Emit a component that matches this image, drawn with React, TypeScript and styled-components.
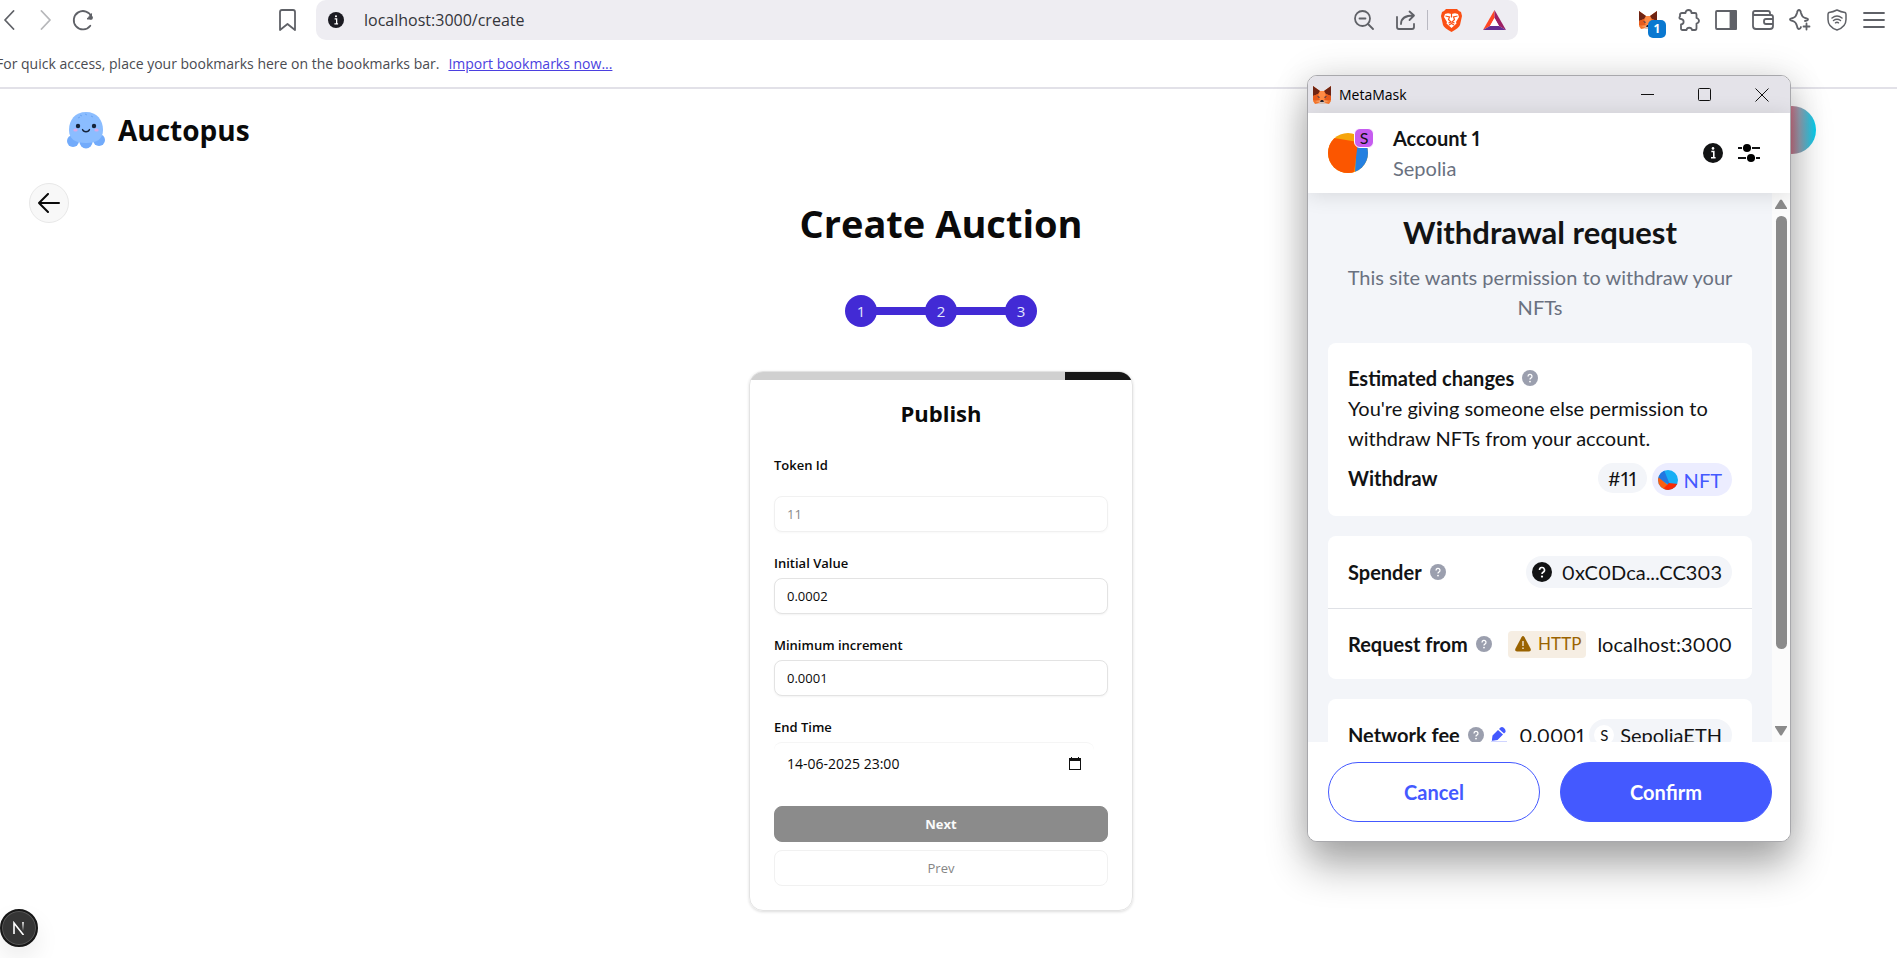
import React from "react";
import styled, { createGlobalStyle } from "styled-components";

const GlobalStyle = createGlobalStyle`
  * { box-sizing: border-box; }
  body { margin: 0; background: #fff; color: #0a0a0a; font-family: "Open Sans", "Noto Sans", sans-serif; }
  button, input { font: inherit; color: inherit; }
  button { cursor: pointer; padding: 0; border: 0; background: none; }
  h1, h2, h3, p { margin: 0; }
  svg { display: block; flex: none; }
`;

/* ---------- Browser chrome ---------- */

const Page = styled.div`
  position: relative;
  min-height: 100vh;
  overflow: hidden;
`;

const Toolbar = styled.div`
  display: flex;
  height: 40px;
  color: #5f6167;
`;

const NavButtons = styled.div`
  display: flex;
  align-items: center;
  width: 316px;
  padding-right: 18px;
`;

const IconButton = styled.button<{ $w: number; $faded?: boolean }>`
  display: flex;
  align-items: center;
  justify-content: center;
  width: ${(p) => p.$w}px;
  height: 40px;
  opacity: ${(p) => (p.$faded ? 0.45 : 1)};
`;

const Grow = styled.span`
  flex: 1;
`;

const AddressBar = styled.div`
  display: flex;
  flex: 1;
  align-items: center;
  min-width: 0;
  padding: 0 2px 0 12px;
  border-radius: 10px;
  background: #eeedf2;
`;

const AddressInput = styled.input`
  flex: 1;
  min-width: 0;
  margin-left: 20px;
  padding: 0;
  border: 0;
  outline: 0;
  background: none;
  color: #33343a;
  font-size: 16px;
  line-height: 24px;
`;

const AddressDivider = styled.span`
  width: 1px;
  height: 20px;
  margin: 0 2px 0 0;
  background: #b9b9c2;
`;

const Extensions = styled.div`
  display: flex;
  align-items: center;
  justify-content: flex-end;
  width: 379px;
  padding-right: 5px;
`;

const ExtensionButton = styled(IconButton)`
  position: relative;
`;

const Count = styled.span`
  position: absolute;
  right: 4px;
  bottom: 2px;
  width: 18px;
  height: 18px;
  border-radius: 5px;
  background: #0a78d0;
  color: #fff;
  font-size: 12px;
  font-weight: 700;
  line-height: 18px;
  text-align: center;
`;

const BookmarksBar = styled.div`
  display: flex;
  align-items: center;
  height: 49px;
  margin-left: -4px;
  border-bottom: 2px solid #e2e1e8;
  color: #4a4b51;
  font-size: 14px;
  white-space: nowrap;

  a {
    margin-left: 9px;
    color: #4b3fe0;
  }
`;

/* ---------- Auction page ---------- */

const SiteHeader = styled.header`
  display: flex;
  align-items: center;
  justify-content: space-between;
  padding: 17px 81px 29px 66px;
`;

const Brand = styled.a`
  display: flex;
  align-items: center;
  gap: 12px;
  color: #0a0a0a;
  font-size: 28px;
  font-weight: 700;
  line-height: 48px;
  text-decoration: none;
`;

const UserAvatar = styled.button`
  width: 48px;
  height: 48px;
  border-radius: 50%;
  background: linear-gradient(90deg, #ff3d6e 0%, #d96f85 45%, #9aa3b5 65%, #00d0f0 100%);
`;

const Main = styled.main`
  display: grid;
  grid-template-columns: 40px 1fr 40px;
  padding: 0 44px 24px 29px;
`;

const BackButton = styled.button`
  display: grid;
  place-items: center;
  width: 40px;
  height: 40px;
  border: 1px solid #e8e8e8;
  border-radius: 50%;
  background: #f8f8f8;
`;

const Content = styled.div`
  display: flex;
  flex-direction: column;
  align-items: center;
  padding-top: 15px;
`;

const PageTitle = styled.h1`
  font-size: 38px;
  font-weight: 700;
  line-height: 50px;
`;

const Steps = styled.ol`
  display: flex;
  align-items: center;
  margin: 47px 0 44px;
  padding: 0;
  list-style: none;
`;

const Step = styled.li`
  display: flex;
  align-items: center;

  & + &::before {
    content: "";
    width: 50px;
    height: 8px;
    margin: 0 -1px;
    background: #422ad5;
  }

  span {
    width: 32px;
    height: 32px;
    border-radius: 50%;
    background: #422ad5;
    color: #e0e7ff;
    font-size: 15px;
    line-height: 32px;
    text-align: center;
  }
`;

const Card = styled.section`
  width: 384px;
  overflow: hidden;
  border: 1px solid #e3e3e3;
  border-radius: 14px;
  box-shadow: 0 1px 3px rgba(0, 0, 0, 0.14);
`;

const Progress = styled.div`
  display: flex;
  justify-content: flex-end;
  height: 8px;
  background: #d0d0d0;

  span {
    width: 67px;
    background: #171717;
  }
`;

const Form = styled.form`
  display: flex;
  flex-direction: column;
  padding: 18px 24px 24px;
`;

const FormTitle = styled.h2`
  margin-bottom: 27px;
  font-size: 22px;
  font-weight: 700;
  line-height: 30px;
  text-align: center;
`;

const Field = styled.div<{ $gap: number }>`
  display: flex;
  flex-direction: column;
  gap: ${(p) => p.$gap}px;
  margin-bottom: 21px;

  label {
    font-size: 13px;
    font-weight: 600;
    line-height: 20px;
  }
`;

const TextInput = styled.input`
  width: 100%;
  height: 36px;
  padding: 0 12px;
  border: 1px solid #e3e3e3;
  border-radius: 8px;
  outline: 0;
  background: #fff;
  box-shadow: 0 1px 2px rgba(0, 0, 0, 0.05);
  font-size: 13px;

  &:disabled {
    opacity: 0.5;
  }
`;

const DateBox = styled.div`
  display: flex;
  align-items: center;
  width: 320px;
  height: 41px;
  margin-bottom: 2px;
  padding-right: 13px;
  border-top: 1px solid #f5f5f5;
  border-radius: 8px;

  input {
    flex: 1;
    min-width: 0;
    border: 0;
    box-shadow: none;
    padding: 0 13px;
    background: none;
    font-size: 14px;
  }
`;

const FormButton = styled.button<{ $primary?: boolean }>`
  height: 36px;
  border: 1px solid ${(p) => (p.$primary ? "#8b8b8b" : "#f1f1f1")};
  border-radius: 8px;
  background: ${(p) => (p.$primary ? "#8b8b8b" : "#fff")};
  color: ${(p) => (p.$primary ? "#fafafa" : "#858585")};
  font-size: 13px;
  font-weight: ${(p) => (p.$primary ? 700 : 500)};

  & + & {
    margin-top: 8px;
  }
`;

const DevBadge = styled.button`
  position: absolute;
  bottom: 11px;
  left: 0;
  display: grid;
  place-items: center;
  width: 38px;
  height: 38px;
  border: 2px solid #171717;
  border-radius: 50%;
  background: #353535;
  box-shadow: inset 0 0 0 1px #555, 0 12px 24px rgba(0, 0, 0, 0.08);
`;

/* ---------- Wallet window ---------- */

const Window = styled.section`
  position: absolute;
  top: 75px;
  right: 106px;
  display: flex;
  flex-direction: column;
  width: 484px;
  height: 767px;
  overflow: hidden;
  border: 1px solid #a8a8ac;
  border-radius: 10px;
  background: #fff;
  box-shadow: 0 24px 40px rgba(0, 0, 0, 0.32), 0 0 36px rgba(0, 0, 0, 0.12);
  color: #121314;
  font-family: Lato, "Open Sans", sans-serif;
  font-size: 20px;
  font-variant-numeric: proportional-nums;
  line-height: 30px;
`;

const TitleBar = styled.div`
  display: flex;
  flex: none;
  align-items: center;
  height: 37px;
  padding: 0 0 0 4px;
  background: #e4e3e9;
  color: #000;
  font-family: "Open Sans", sans-serif;
  font-size: 14px;

  span {
    flex: 1;
    margin-left: 7px;
  }
`;

const Account = styled.header`
  z-index: 1;
  display: flex;
  flex: none;
  align-items: center;
  height: 80px;
  padding: 0 23px 0 20px;
  background: #fff;
  box-shadow: 0 2px 20px rgba(0, 0, 0, 0.12);
`;

const AccountIcon = styled.div`
  position: relative;
  width: 40px;
  height: 40px;
`;

const NetworkBadge = styled.span`
  position: absolute;
  top: -5px;
  right: -6px;
  width: 20px;
  height: 20px;
  border: 1px solid #fff;
  border-radius: 6px;
  background: #c65cf0;
  font-size: 16px;
  line-height: 18px;
  text-align: center;
`;

const AccountName = styled.div`
  flex: 1;
  margin-left: 25px;
  line-height: 30px;

  strong {
    display: block;
    font-weight: 700;
  }

  span {
    color: #6a7180;
  }
`;

const Body = styled.div`
  display: flex;
  flex: 1;
  min-height: 0;
  overflow: hidden;
  background: #f3f5f9;
`;

const Scroller = styled.div`
  flex: 1;
  padding: 19px 20px 20px;
`;

const ScrollBar = styled.div`
  display: flex;
  flex-direction: column;
  align-items: center;
  width: 18px;
  padding: 6px 0;
  background: #fbfbfb;

  span {
    width: 11px;
    height: 433px;
    margin: 7px 0 auto;
    border-radius: 6px;
    background: #8a8a8a;
  }
`;

const RequestTitle = styled.h2`
  font-size: 31px;
  font-weight: 700;
  line-height: 40px;
  text-align: center;
`;

const RequestText = styled.p`
  margin: 10px 0 21px;
  color: #6a7180;
  text-align: center;
`;

const Panel = styled.section`
  margin-bottom: 20px;
  border-radius: 8px;
  background: #fff;
`;

const Changes = styled.div`
  padding: 20px;
`;

const Row = styled.div`
  display: flex;
  align-items: center;
  padding: 20px;

  & + & {
    border-top: 1px solid #dfe1e6;
  }

  ${Changes} & {
    align-items: flex-start;
    margin-top: 10px;
    padding: 0;
  }
`;

const Label = styled.h3`
  display: flex;
  flex: 1;
  align-items: center;
  gap: 8px;
  font-size: 20px;
  font-weight: 700;
  line-height: 30px;
  white-space: nowrap;
`;

const Chip = styled.span<{ $tone?: "blue"; $h: number }>`
  display: flex;
  align-items: center;
  gap: 6px;
  height: ${(p) => p.$h}px;
  margin-left: 5px;
  padding: 0 10px;
  border-radius: 17px;
  background: ${(p) => (p.$tone ? "#ecedff" : "#f3f5f9")};
  color: ${(p) => (p.$tone ? "#4459ff" : "#121314")};

  svg {
    margin-left: -4px;
  }
`;

const AddressChip = styled(Chip)`
  gap: 10px;
`;

const TokenMark = styled.span`
  width: 20px;
  height: 20px;
  margin-left: -5px;
  border-radius: 50%;
  background: #fff;
  font-size: 15px;
  line-height: 20px;
  text-align: center;
`;

const HttpTag = styled.span`
  display: flex;
  align-items: center;
  gap: 7px;
  height: 27px;
  margin-right: 11px;
  padding: 0 5px 0 7px;
  border-radius: 4px;
  background: #f6eee3;
  color: #9a6300;
  font-size: 17px;
`;

const EditButton = styled.button`
  margin-right: 12px;
`;

const Footer = styled.footer`
  display: grid;
  flex: none;
  grid-template-columns: 1fr 1fr;
  gap: 20px;
  height: 99px;
  padding: 20px 18px 19px 20px;
  background: #fff;
`;

const FooterButton = styled.button<{ $primary?: boolean }>`
  border: 1px solid #4459ff;
  border-radius: 30px;
  background: ${(p) => (p.$primary ? "#4459ff" : "#fff")};
  color: ${(p) => (p.$primary ? "#fff" : "#4459ff")};
  font-weight: 700;
`;

/* ---------- Icons ---------- */

const line = { fill: "none", stroke: "currentColor", strokeWidth: 1.8, strokeLinecap: "round", strokeLinejoin: "round" } as const;

const Fox = ({ size }: { size: number }) => (
  <svg width={size} height={size} viewBox="0 0 20 20">
    <path d="M1 1 8 6h4l7-5v9l-1 2 1 4-2 3-5-1-1 1H9l-1-1-5 1-2-3 1-4-1-2z" fill="#f5762c" />
    <path d="M1 1 8 6 6 9 1 11zM19 1l-7 5 2 3 5 2z" fill="#6f2413" />
    <path d="M8 6h4l2 6-2 4H8l-2-4z" fill="#ff8b45" />
    <path d="M1 11l5-2 2 7-7-1zM19 11l-5-2-2 7 7-1z" fill="#e75b1c" />
    <path d="m5 11 3 1-1 1zM15 11l-3 1 1 1z" fill="#2b3350" />
    <path d="M3 16l5-1v3zM17 16l-5-1v3z" fill="#f79b60" />
    <path d="M8 16h4l1 3H7z" fill="#d9c4ba" />
    <path d="M9 15h2l1 2H8z" fill="#27222c" />
  </svg>
);

const Info = ({ size, color = "#121314" }: { size: number; color?: string }) => (
  <svg width={size} height={size} viewBox="0 0 20 20">
    <circle cx="10" cy="10" r="10" fill={color} />
    <path d="M8.3 8.5h2.5v6M8 14.8h4.6" stroke="#fff" strokeWidth="1.6" fill="none" />
    <circle cx="10" cy="5.4" r="1.3" fill="#fff" />
  </svg>
);

const Help = ({ size = 16, color = "#9b9fae" }: { size?: number; color?: string }) => (
  <svg width={size} height={size} viewBox="0 0 16 16">
    <circle cx="8" cy="8" r="8" fill={color} />
    <path d="M6 6.4a2 2 0 1 1 2.9 1.8c-.6.3-.9.6-.9 1.3" fill="none" stroke="#fff" strokeWidth="1.3" />
    <circle cx="8" cy="11.6" r=".9" fill="#fff" />
  </svg>
);

const Octopus = () => (
  <svg width="40" height="40" viewBox="0 0 40 40">
    <g fill="#72abfb">
      <circle cx="7" cy="31" r="6" />
      <circle cx="33" cy="30" r="6" />
      <circle cx="20" cy="32" r="6.5" />
    </g>
    <path d="M20 2C9 2 3 10 3 20c0 9 6 13 17 13s17-4 17-13C37 10 31 2 20 2z" fill="#8bbdff" />
    <path d="m14 5 2 1M19 4l2 1M25 6l2 1M12 8l2-1" stroke="#6ca5f2" />
    <circle cx="12" cy="16" r="2.2" fill="#15233a" />
    <circle cx="28" cy="16" r="2.2" fill="#15233a" />
    <path d="M16.500 19.500c1 3 6 3 7 0" fill="none" stroke="#15233a" strokeWidth="1.300" strokeLinecap="round" />
    <ellipse cx="9.500" cy="20" rx="2.200" ry="1.500" fill="#d8a9e5" />
    <ellipse cx="30.500" cy="20" rx="2.200" ry="1.500" fill="#d8a9e5" />
  </svg>
);

const Jazzicon = () => (
  <svg width="40" height="40" viewBox="0 0 40 40">
    <clipPath id="account-disc"><circle cx="20" cy="20" r="20" /></clipPath>
    <g clipPath="url(#account-disc)">
      <path d="M0 0h40v40H0z" fill="#f6a50b" />
      <path d="M29 0h11v40H27z" fill="#2480e0" />
      <path d="M0 4l30 5-4 31H0z" fill="#fb5600" />
    </g>
  </svg>
);

const NftDisc = () => (
  <svg width="20" height="20" viewBox="0 0 20 20">
    <clipPath id="nft-disc"><circle cx="10" cy="10" r="10" /></clipPath>
    <g clipPath="url(#nft-disc)">
      <path d="M0 0h20v20H0z" fill="#18aef5" />
      <path d="M6 0 12 15 0 9V0z" fill="#2377e0" />
      <path d="M0 7l11 9-2 4H0z" fill="#fb5e10" />
      <path d="m6 18 5-5 9 1-4 6H7z" fill="#f92a06" />
    </g>
  </svg>
);

const BackChevron = () => (
  <svg width="12" height="20" viewBox="0 0 12 20" {...line}><path d="M10.500 1 2 10l8.500 9" /></svg>
);
const ForwardChevron = () => (
  <svg width="12" height="20" viewBox="0 0 12 20" {...line}><path d="m1.500 1 8.500 9-8.500 9" /></svg>
);
const Reload = () => (
  <svg width="24" height="24" viewBox="0 0 24 24" {...line}>
    <path d="M19.300 17.800A9.200 9.200 0 1 1 20.600 9" /><circle cx="20" cy="9.800" r="1.900" fill="currentColor" stroke="none" />
    <path d="M20.500 6v5h-4z" fill="currentColor" strokeWidth="1" />
  </svg>
);
const Bookmark = () => (
  <svg width="17" height="22" viewBox="0 0 17 22" {...line}><path d="M3 1h11q2 0 2 2v18l-7.500-6L1 21V3q0-2 2-2z" /></svg>
);
const ZoomOut = () => (
  <svg width="20" height="20" viewBox="0 0 20 20" {...line}><circle cx="8.500" cy="8.500" r="7.500" /><path d="m14 14 5 5M5.500 8.500h6" /></svg>
);
const Share = () => (
  <svg width="20" height="20" viewBox="0 0 20 20" {...line}>
    <path d="M1 7v10q0 2 2 2h13q2 0 2-2v-3M5 14C5 8 9 5.500 17.500 5.500M13.500 1.500l4.500 4-4.500 4.500" />
  </svg>
);
const Brave = () => (
  <svg width="21" height="24" viewBox="0 0 21 24">
    <path d="m5 1h11l2 2 2 1 1 4-2 9q-1 3-8.500 7Q3 20 2 17L0 8l1-4 2-1z" fill="#fb4f14" />
    <path d="m4 6 3-.8 3.500.8 3.500-.8 3 .8 1 3-3 5 .5 1.500-5 4.500-5-4.500L6 14 3 9z" fill="#fff" />
    <path d="m4.500 8 4 1-1 2.500L10 14l-2.500 1M16.500 8l-4 1 1 2.500L11 14l2.500 1M10.500 5.500v4M8 17l2.500-1.500L13 17" fill="none" stroke="#fb4f14" strokeWidth="1.200" />
  </svg>
);
const Bat = () => (
  <svg width="23" height="20" viewBox="0 0 23 20">
    <path d="M11.500 0 0 20l7-4 4.500-8z" fill="#ff4724" />
    <path d="M11.500 0 23 20l-7-4-4.500-8z" fill="#9e1f63" />
    <path d="M0 20h23l-7-4H7z" fill="#662d91" />
    <path d="m11.500 8 4.500 8H7z" fill="#fff" />
  </svg>
);
const Puzzle = () => (
  <svg width="22" height="22" viewBox="0 0 22 22" {...line}>
    <path d="M4 4h3.500C7.500 0 13.500 0 13.500 4H17q1.500 0 1.500 1.500V9c3.300 1 3.300 4.500 0 5.500V19q0 2-1.500 2h-3c-.5-3-5-3-5.500 0H4.500Q3 21 3 19.500V15.500c3.500-.5 3.500-5 0-5.500-2 0-2-2-1-2.500V5.500Q2 4 4 4z" />
  </svg>
);
const SidePanel = () => (
  <svg width="22" height="20" viewBox="0 0 22 20" {...line}><rect x="1" y="1" width="20" height="18" rx="1" /><path d="M15.500 1H21v18h-5.500z" fill="currentColor" /></svg>
);
const WalletIcon = () => (
  <svg width="22" height="20" viewBox="0 0 22 20" {...line}>
    <path d="M18 4V3q0-2-2-2H3Q1 1 1 3v13q0 3 3 3h14q3 0 3-3V7q0-2-2-2H3Q1 5 1 3M21 9h-7q-2 0-2 2v1q0 2 2 2h7" />
  </svg>
);
const Sparkle = () => (
  <svg width="22" height="22" viewBox="0 0 22 22" {...line}>
    <path d="M10 1q1.500 0 2 3 1 4 4 5 3 .5 3 1.500t-3 1.500M10 1Q8.500 1 8 4 7 8 4 9q-3 .5-3 1.500T4 12q3 1 4 5 .5 3 2 3t2-2" />
    <path d="M17.500 14.500v6M14.500 17.500h6" />
  </svg>
);
const Shield = () => (
  <svg width="20" height="22" viewBox="0 0 20 22" {...line} strokeWidth={1.500}>
    <path d="M10 1q4 2 8 2.500 1 .5 1 2v5Q19 18 10 21 1 18 1 10.500v-5q0-1.500 1-2Q6 3 10 1z" />
    <path d="M5 9q5-4 10 0M6.500 11.500q3.500-2.500 7 0M8.500 13.800q1.500-1 3 0" />
  </svg>
);
const Menu = () => (
  <svg width="22" height="16" viewBox="0 0 22 16" {...line}><path d="M1 1h20M1 8h20M1 15h20" /></svg>
);
const ArrowLeft = () => (
  <svg width="22" height="20" viewBox="0 0 22 20" {...line} strokeWidth={2}><path d="M10 1 1 10l9 9M1 10h20" /></svg>
);
const Calendar = () => (
  <svg width="12" height="13" viewBox="0 0 12 13"><path d="M2 0h1v1h6V0h1v1h2v12H0V1h2zM1 4v8h10V4z" fill="#111" fillRule="evenodd" /></svg>
);
const Minimise = () => (
  <svg width="14" height="14" viewBox="0 0 14 14"><path d="M0 6.500h13" stroke="#111" /></svg>
);
const Maximise = () => (
  <svg width="14" height="14" viewBox="0 0 14 14"><rect x=".5" y=".5" width="12" height="12" rx="1" fill="none" stroke="#111" /></svg>
);
const Close = () => (
  <svg width="14" height="14" viewBox="0 0 14 14"><path d="m.5.5 13 13M13.500.5l-13 13" stroke="#111" /></svg>
);
const Sliders = () => (
  <svg width="22" height="20" viewBox="0 0 22 20">
    <path d="M0 5h22M0 15h22" stroke="#121314" strokeWidth="2" /><circle cx="9" cy="5" r="4" /><circle cx="13" cy="15" r="4" />
    <path d="M4.500 4v2M13.500 4v2M8.500 14v2M17.500 14v2" stroke="#fff" />
  </svg>
);
const Warning = () => (
  <svg width="16" height="16" viewBox="0 0 16 16">
    <path d="M6.500 1.200q1.500-2.200 3 0l6 11.300q1.200 3-1.500 3H2q-2.700 0-1.500-3z" fill="#9a6300" />
    <path d="M8 5v5M8 11.500V13" stroke="#f6eee3" strokeWidth="1.300" />
  </svg>
);
const Pencil = () => (
  <svg width="16" height="16" viewBox="0 0 16 16" fill="#4459ff">
    <path d="M1.500 8.500 7 3l5 4.500-5.500 5.500-5 .8q-.8 0-.6-.8zM8 2l1.500-1.400Q11-.6 13 1t1.500 4L13 6.500zM0 14.700h16V16H0z" />
  </svg>
);
const Triangle = ({ down }: { down?: boolean }) => (
  <svg width="12" height="10" viewBox="0 0 12 10"><path d={down ? "M0 0h12v1L7 9q-1 1-2 0L0 1z" : "M0 10h12V9L7 1Q6 0 5 1L0 9z"} fill="#8a8a8a" /></svg>
);
const NextMark = () => (
  <svg width="14" height="14" viewBox="0 0 14 14">
    <defs>
      <linearGradient id="stem" x1="0" y1="0" x2="0" y2="1"><stop stopColor="#fff" /><stop offset="1" stopColor="#fff" stopOpacity="0" /></linearGradient>
    </defs>
    <path d="M2 13V2l9.500 12" fill="none" stroke="#fff" strokeWidth="1.600" />
    <path d="M10.200 1h1.600v9h-1.600z" fill="url(#stem)" />
  </svg>
);

/* ---------- Page ---------- */

const extensions = [
  { name: "Extensions", icon: <Puzzle /> },
  { name: "Side panel", icon: <SidePanel /> },
  { name: "Wallet", icon: <WalletIcon /> },
  { name: "Leo AI", icon: <Sparkle /> },
  { name: "VPN", icon: <Shield /> },
  { name: "Menu", icon: <Menu /> },
];

function BrowserChrome() {
  return (
    <>
      <Toolbar>
        <NavButtons>
          <IconButton $w={18} aria-label="Back"><BackChevron /></IconButton>
          <IconButton $w={56} $faded aria-label="Forward"><ForwardChevron /></IconButton>
          <IconButton $w={18} aria-label="Reload"><Reload /></IconButton>
          <Grow />
          <IconButton $w={22} aria-label="Bookmark this page"><Bookmark /></IconButton>
        </NavButtons>
        <AddressBar>
          <Info size={16} color="#1b1b22" />
          <AddressInput aria-label="Address" defaultValue="localhost:3000/create" />
          <IconButton $w={42} aria-label="Zoom out"><ZoomOut /></IconButton>
          <IconButton $w={42} aria-label="Share"><Share /></IconButton>
          <AddressDivider />
          <IconButton $w={42} aria-label="Brave Shields"><Brave /></IconButton>
          <IconButton $w={44} aria-label="Brave Rewards"><Bat /></IconButton>
        </AddressBar>
        <Extensions>
          <ExtensionButton $w={44} aria-label="MetaMask"><Fox size={20} /><Count>1</Count></ExtensionButton>
          {extensions.map((e) => (
            <IconButton key={e.name} $w={37} aria-label={e.name}>{e.icon}</IconButton>
          ))}
        </Extensions>
      </Toolbar>
      <BookmarksBar>
        For quick access, place your bookmarks here on the bookmarks bar.
        <a href="#import">Import bookmarks now...</a>
      </BookmarksBar>
    </>
  );
}

function AuctionForm() {
  return (
    <Card>
      <Progress><span /></Progress>
      <Form onSubmit={(e) => e.preventDefault()}>
        <FormTitle>Publish</FormTitle>
        <Field $gap={21}>
          <label htmlFor="token">Token Id</label>
          <TextInput id="token" defaultValue="11" disabled />
        </Field>
        <Field $gap={5}>
          <label htmlFor="initial">Initial Value</label>
          <TextInput id="initial" defaultValue="0.0002" />
        </Field>
        <Field $gap={5}>
          <label htmlFor="increment">Minimum increment</label>
          <TextInput id="increment" defaultValue="0.0001" />
        </Field>
        <Field $gap={5}>
          <label htmlFor="end">End Time</label>
          <DateBox>
            <TextInput id="end" defaultValue="14-06-2025 23:00" />
            <button type="button" aria-label="Open calendar"><Calendar /></button>
          </DateBox>
        </Field>
        <FormButton $primary type="submit">Next</FormButton>
        <FormButton type="button">Prev</FormButton>
      </Form>
    </Card>
  );
}

function WalletWindow() {
  return (
    <Window aria-label="MetaMask">
      <TitleBar>
        <Fox size={20} />
        <span>MetaMask</span>
        <IconButton $w={57} aria-label="Minimise"><Minimise /></IconButton>
        <IconButton $w={57} aria-label="Maximise"><Maximise /></IconButton>
        <IconButton $w={57} aria-label="Close"><Close /></IconButton>
      </TitleBar>
      <Account>
        <AccountIcon><Jazzicon /><NetworkBadge>S</NetworkBadge></AccountIcon>
        <AccountName><strong>Account 1</strong><span>Sepolia</span></AccountName>
        <IconButton $w={36} aria-label="Account details"><Info size={20} /></IconButton>
        <IconButton $w={36} aria-label="Settings"><Sliders /></IconButton>
      </Account>
      <Body>
        <Scroller>
          <RequestTitle>Withdrawal request</RequestTitle>
          <RequestText>This site wants permission to withdraw your NFTs</RequestText>
          <Panel>
            <Changes>
              <Label>Estimated changes <Help /></Label>
              <p>You're giving someone else permission to withdraw NFTs from your account.</p>
              <Row>
                <Label>Withdraw</Label>
                <Chip $h={30}>#11</Chip>
                <Chip $h={33} $tone="blue"><NftDisc />NFT</Chip>
              </Row>
            </Changes>
          </Panel>
          <Panel>
            <Row>
              <Label>Spender <Help /></Label>
              <AddressChip $h={32}><Help size={20} color="#121314" />0xC0Dca...CC303</AddressChip>
            </Row>
            <Row>
              <Label>Request from <Help /></Label>
              <HttpTag><Warning />HTTP</HttpTag>
              <span>localhost:3000</span>
            </Row>
          </Panel>
          <Panel>
            <Row>
              <Label>Network fee <Help /></Label>
              <EditButton aria-label="Edit network fee"><Pencil /></EditButton>
              <span>0.0001</span>
              <Chip $h={32}><TokenMark>S</TokenMark>SepoliaETH</Chip>
            </Row>
          </Panel>
        </Scroller>
        <ScrollBar><Triangle /><span /><Triangle down /></ScrollBar>
      </Body>
      <Footer>
        <FooterButton>Cancel</FooterButton>
        <FooterButton $primary>Confirm</FooterButton>
      </Footer>
    </Window>
  );
}

export default function App() {
  return (
    <Page>
      <GlobalStyle />
      <BrowserChrome />
      <SiteHeader>
        <Brand href="#home"><Octopus />Auctopus</Brand>
        <UserAvatar aria-label="Profile" />
      </SiteHeader>
      <Main>
        <BackButton aria-label="Go back"><ArrowLeft /></BackButton>
        <Content>
          <PageTitle>Create Auction</PageTitle>
          <Steps>
            {[1, 2, 3].map((n) => (
              <Step key={n}><span>{n}</span></Step>
            ))}
          </Steps>
          <AuctionForm />
        </Content>
      </Main>
      <DevBadge aria-label="Open Next.js dev tools"><NextMark /></DevBadge>
      <WalletWindow />
    </Page>
  );
}
